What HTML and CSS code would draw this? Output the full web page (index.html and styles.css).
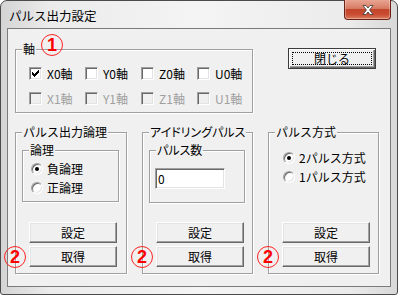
FILE: index.html
```html
<!DOCTYPE html>
<html lang="ja">
<head>
  <meta charset="UTF-8">
  <title>パルス出力設定</title>
  <link rel="stylesheet" href="styles.css">
</head>
<body>
  <div class="window">
    <div class="titlebar">
      <span class="title">パルス出力設定</span>
      <button class="close" type="button">
        <svg width="12" height="10" viewBox="0 0 12 10"><path d="M1 0.5H4L6 3L8 0.5H11L7.6 5L11 9.5H8L6 7L4 9.5H1L4.4 5Z" fill="#fff" stroke="#3a3a3a" stroke-width="0.8"/></svg>
      </button>
    </div>

    <div class="client">
      <div class="top-row">
        <fieldset class="group axis">
          <legend>軸<span class="mark mark-axis">1</span></legend>
          <div class="axis-grid">
            <label class="check"><span class="box"><svg width="7" height="7" viewBox="0 0 7 7" shape-rendering="crispEdges"><path d="M6 0h1v1h-1zM5 1h2v1h-2zM0 2h1v1h-1zM4 2h3v1h-3zM0 3h2v1h-2zM3 3h3v1h-3zM0 4h5v1h-5zM1 5h3v1h-3zM2 6h1v1h-1z" fill="#000"/></svg></span>X0軸</label>
            <label class="check"><span class="box"></span>Y0軸</label>
            <label class="check"><span class="box"></span>Z0軸</label>
            <label class="check"><span class="box"></span>U0軸</label>
            <label class="check disabled"><span class="box"></span>X1軸</label>
            <label class="check disabled"><span class="box"></span>Y1軸</label>
            <label class="check disabled"><span class="box"></span>Z1軸</label>
            <label class="check disabled"><span class="box"></span>U1軸</label>
          </div>
        </fieldset>
        <button class="btn btn-default" type="button"><span class="focus">閉じる</span></button>
      </div>

      <div class="bottom-row">
        <fieldset class="group panel">
          <legend>パルス出力論理</legend>
          <fieldset class="group inner">
            <legend>論理</legend>
            <div class="radios">
              <label class="radio"><span class="dot on"></span>負論理</label>
              <label class="radio"><span class="dot"></span>正論理</label>
            </div>
          </fieldset>
          <div class="actions">
            <button class="btn" type="button">設定</button>
            <div class="get"><span class="mark">2</span><button class="btn" type="button">取得</button></div>
          </div>
        </fieldset>

        <fieldset class="group panel">
          <legend class="narrow">アイドリングパルス</legend>
          <fieldset class="group inner">
            <legend class="narrow">パルス数</legend>
            <div class="count">
              <input class="field" type="text" value="0">
            </div>
          </fieldset>
          <div class="actions">
            <button class="btn" type="button">設定</button>
            <div class="get"><span class="mark">2</span><button class="btn" type="button">取得</button></div>
          </div>
        </fieldset>

        <fieldset class="group panel">
          <legend>パルス方式</legend>
          <div class="radios mode">
            <label class="radio"><span class="dot on"></span>2パルス方式</label>
            <label class="radio"><span class="dot"></span>1パルス方式</label>
          </div>
          <div class="actions">
            <button class="btn" type="button">設定</button>
            <div class="get"><span class="mark">2</span><button class="btn" type="button">取得</button></div>
          </div>
        </fieldset>
      </div>
    </div>
  </div>
</body>
</html>
```

FILE: styles.css
```css
* {
  box-sizing: border-box;
}

body {
  margin: 0;
  font-family: "Noto Sans CJK JP", sans-serif;
  font-size: 12px;
  line-height: 14px;
  color: #000;
  background: #fff;
}

.window {
  width: 398px;
  height: 295px;
  border: 1px solid #4b4b4b;
  border-radius: 7px 7px 3px 3px;
  background: linear-gradient(to right, #d4d4d4, #ebebeb 12%, #f4f4f4 50%, #ebebeb 88%, #d8d8d8);
  padding: 0 6px 7px 6px;
  display: flex;
  flex-direction: column;
}

.titlebar {
  height: 27px;
  display: flex;
  align-items: flex-start;
}

.title {
  flex: 1;
  padding: 8px 0 0 2px;
  font-size: 12.5px;
}

.close {
  width: 47px;
  height: 20px;
  margin-top: -1px;
  padding: 0;
  border: 1px solid #6b2114;
  border-top: none;
  border-radius: 0 0 4px 4px;
  background: linear-gradient(#e8a593, #d77a62 45%, #c2452c 50%, #c94b30 75%, #dc7a5c);
  box-shadow: inset 0 -1px 0 rgba(255, 255, 255, 0.35), inset 1px 0 0 rgba(255, 255, 255, 0.3), inset -1px 0 0 rgba(255, 255, 255, 0.3);
  display: flex;
  align-items: center;
  justify-content: center;
}

.client {
  flex: 1;
  border: 1px solid #7b7b7b;
  background: #f0f0f0;
  padding: 13px 0 0 7px;
}

.top-row {
  display: flex;
  align-items: flex-start;
}

.group {
  margin: 0;
  padding: 0;
  min-inline-size: 0;
  border: 1px solid #a0a0a0;
  box-shadow: inset 1px 1px 0 #fff, 1px 1px 0 #fff;
}

.group legend {
  position: relative;
  margin-left: 6px;
  padding: 0 1px;
  line-height: 14px;
  white-space: nowrap;
  background: #f0f0f0;
}

.group legend.narrow {
  font-feature-settings: "palt";
}

.axis {
  width: 238px;
}

.axis-grid {
  display: grid;
  grid-template-columns: repeat(4, 56px);
  row-gap: 12px;
  padding: 11px 0 7px 13px;
}

.check {
  display: flex;
  align-items: center;
  gap: 5px;
  height: 13px;
}

.box {
  width: 13px;
  height: 13px;
  flex: none;
  border: 1px solid;
  border-color: #a0a0a0 #fff #fff #a0a0a0;
  box-shadow: inset 1px 1px 0 #696969, inset -1px -1px 0 #e3e3e3;
  background: #fff;
  display: flex;
  align-items: center;
  justify-content: center;
}

.disabled {
  color: #a0a0a0;
}

.disabled .box {
  background: #f0f0f0;
}

.btn {
  width: 88px;
  height: 21px;
  padding: 0;
  font: inherit;
  color: #000;
  background: #f0f0f0;
  border: 1px solid;
  border-color: #fff #696969 #696969 #fff;
  box-shadow: inset -1px -1px 0 #a0a0a0, inset 1px 1px 0 #e3e3e3;
}

.btn-default {
  margin: 6px 0 0 35px;
  border-color: #3c3c3c;
  box-shadow: inset 1px 1px 0 #fff, inset -1px -1px 0 #696969, inset -2px -2px 0 #a0a0a0;
  display: flex;
  padding: 3px;
}

.focus {
  flex: 1;
  border: 1px dotted #000;
  line-height: 11px;
}

.bottom-row {
  display: flex;
  gap: 15px;
  margin-top: 12px;
}

.panel {
  width: 111px;
  height: 149px;
  display: flex;
  flex-direction: column;
}

.panel:first-child {
  width: 112px;
}

.inner {
  margin: 4px 7px 0 6px;
}

.radios {
  display: flex;
  flex-direction: column;
  gap: 3px;
  padding: 4px 0 5px 8px;
}

.radios.mode {
  padding: 11px 0 0 14px;
}

.radio {
  display: flex;
  align-items: center;
  gap: 4px;
  height: 16px;
}

.dot {
  width: 12px;
  height: 12px;
  flex: none;
  border-radius: 50%;
  border: 1px solid;
  border-color: #a0a0a0 #fff #fff #a0a0a0;
  box-shadow: inset 1px 1px 0 #696969, inset -1px -1px 0 #e3e3e3;
  background: #fff;
  display: flex;
  align-items: center;
  justify-content: center;
}

.dot.on::after {
  content: "";
  width: 4px;
  height: 4px;
  border-radius: 50%;
  background: #000;
}

.count {
  padding: 11px 0 13px 5px;
}

.field {
  display: block;
  width: 70px;
  height: 21px;
  margin: 0;
  padding: 0 2px;
  font: inherit;
  background: #fff;
  border: 1px solid;
  border-color: #a0a0a0 #fff #fff #a0a0a0;
  box-shadow: inset 1px 1px 0 #696969, inset -1px -1px 0 #e3e3e3;
  outline: none;
}

.actions {
  margin-top: auto;
  display: flex;
  flex-direction: column;
  gap: 3px;
  padding: 0 0 6px 13px;
}

.get {
  position: relative;
}

/* red annotation circles */
.mark {
  position: absolute;
  left: -25px;
  top: 0;
  width: 22px;
  height: 22px;
  border: 1px solid #f22;
  border-radius: 50%;
  color: #f00;
  font-family: "Liberation Sans", sans-serif;
  font-weight: bold;
  font-size: 18px;
  line-height: 20px;
  text-align: center;
  background: transparent;
}

.mark-axis {
  left: 19px;
  top: -8px;
}
```
